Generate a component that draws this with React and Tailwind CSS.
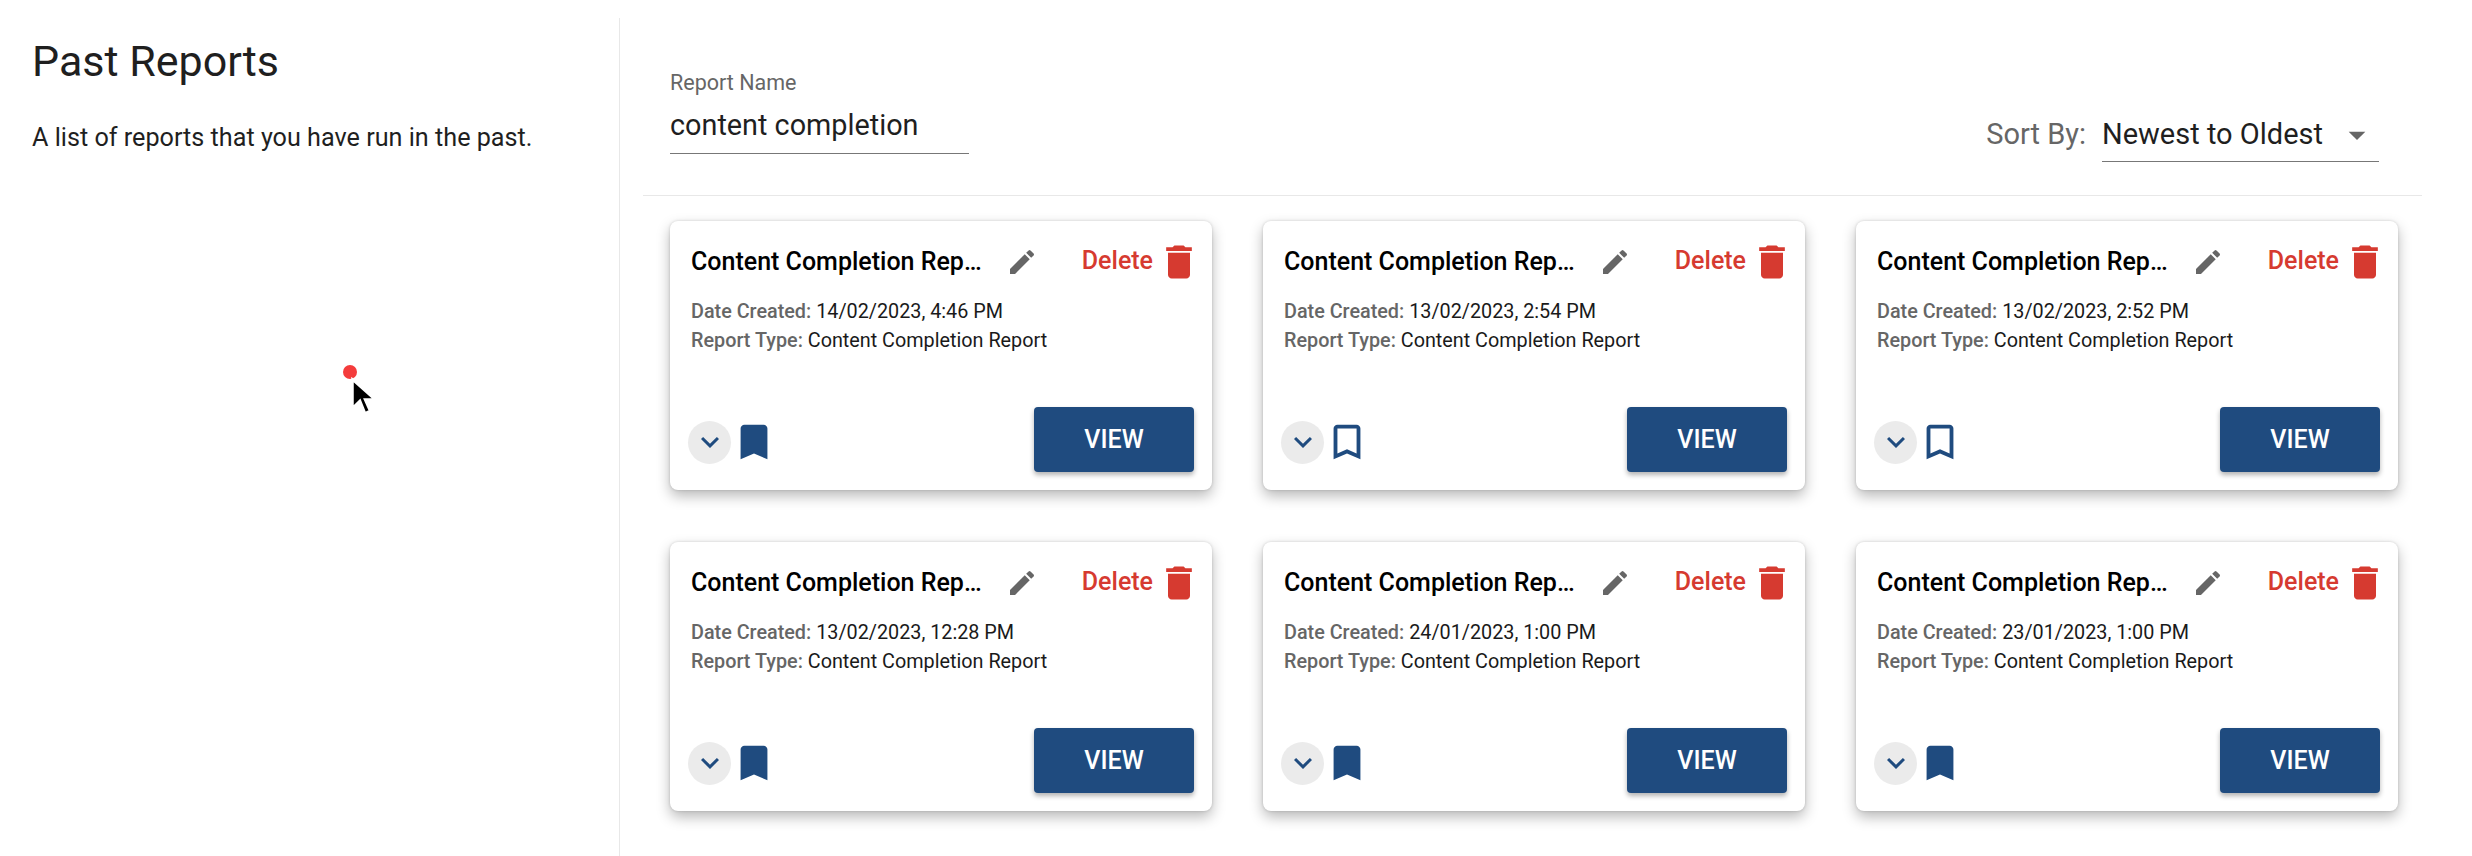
const P = {
  edit: "M3 17.25V21h3.75L17.81 9.94l-3.75-3.75L3 17.25zM20.71 7.04c.39-.39.39-1.02 0-1.41l-2.34-2.34a.9959.9959 0 0 0-1.41 0l-1.83 1.83 3.75 3.75 1.83-1.83z",
  trash: "M6 19c0 1.1.9 2 2 2h8c1.1 0 2-.9 2-2V7H6v12zM19 4h-3.5l-1-1h-5l-1 1H5v2h14V4z",
  chev: "M7.41 8.59 12 13.17l4.59-4.58L18 10l-6 6-6-6 1.41-1.41z",
  mark: "M17 3H7c-1.1 0-1.99.9-1.99 2L5 21l7-3 7 3V5c0-1.1-.9-2-2-2z",
  markO: "M17 3H7c-1.1 0-2 .9-2 2v16l7-3 7 3V5c0-1.1-.9-2-2-2zm0 15-5-2.18L7 18V5h10v13z",
  drop: "M7 10l5 5 5-5z",
};

function Icon({ d, className }) {
  return (
    <svg viewBox="0 0 24 24" fill="currentColor" className={className}>
      <path d={d} />
    </svg>
  );
}

const reports = [
  { date: "14/02/2023, 4:46 PM", saved: true },
  { date: "13/02/2023, 2:54 PM", saved: false },
  { date: "13/02/2023, 2:52 PM", saved: false },
  { date: "13/02/2023, 12:28 PM", saved: true },
  { date: "24/01/2023, 1:00 PM", saved: true },
  { date: "23/01/2023, 1:00 PM", saved: true },
];

function Card({ date, saved }) {
  return (
    <div className="h-[269px] rounded-[8px] bg-white pt-[25px] pb-[18px] pl-[21px] pr-[18px] flex flex-col shadow-[0_6px_14px_rgba(0,0,0,0.28),0_0_3px_rgba(0,0,0,0.16)]">
      <div className="flex items-center h-[32px]">
        <span className="w-[295px] truncate text-[25px] leading-[32px] font-medium text-black">
          Content Completion Report
        </span>
        <Icon d={P.edit} className="w-[32px] h-[32px] ml-[20px] text-[#666666]" />
        <span className="ml-auto text-[25px] leading-[32px] font-medium text-[#d63a30] -mt-[2px]">Delete</span>
        <Icon d={P.trash} className="w-[44px] h-[44px] -mr-[7px] ml-[4px] text-[#d63a30]" />
      </div>
      <div className="mt-[19px] text-[19.8px] leading-[29px] text-[#1a1a1a]">
        <div><span className="font-medium text-[#666666]">Date Created:</span> {date}</div>
        <div><span className="font-medium text-[#666666]">Report Type:</span> Content Completion Report</div>
      </div>
      <div className="mt-auto flex items-end justify-between">
        <div className="flex items-center -ml-[3px] mb-[7px]">
          <div className="w-[43px] h-[43px] rounded-full bg-[#ebebeb] flex items-center justify-center">
            <Icon d={P.chev} className="w-[36px] h-[36px] text-[#1f4b7f]" />
          </div>
          <Icon d={saved ? P.mark : P.markO} className="w-[46px] h-[46px] text-[#1f4b7f]" />
        </div>
        <button className="w-[160px] h-[65px] rounded-[4px] bg-[#1f4b7f] text-white text-[25px] font-medium shadow-[0_3px_5px_rgba(0,0,0,0.3)]">
          VIEW
        </button>
      </div>
    </div>
  );
}

export default function App() {
  return (
    <div className="relative h-[856px] w-[2472px] overflow-hidden bg-white flex font-['Roboto',sans-serif]">
      <aside className="w-[620px] mt-[18px] shrink-0 border-r border-[#e8e8e8] pl-[32px]">
        <h1 className="mt-[17px] text-[43px] leading-[52px] text-[#1f1f1f]">Past Reports</h1>
        <p className="mt-[35px] text-[25.2px] leading-[32px] text-[#1f1f1f]">A list of reports that you have run in the past.</p>
      </aside>
      <main className="flex-1 pl-[23px] pr-[50px]">
        <div className="h-[196px] border-b border-[#e8e8e8] pl-[27px] pr-[43px] flex items-start justify-between">
          <div className="mt-[70px] w-[299px]">
            <div className="text-[21.5px] leading-[26px] text-[#666666]">Report Name</div>
            <div className="mt-[1px] h-[57px] border-b border-[#777777] text-[28.8px] leading-[56px] text-[#1f1f1f]">content completion</div>
          </div>
          <div className="mt-[112px] flex items-start">
            <span className="text-[29px] leading-[45px] text-[#666666]">Sort By:</span>
            <div className="ml-[16px] w-[277px] h-[50px] border-b border-[#777777] flex items-start justify-between">
              <span className="text-[29px] leading-[45px] text-[#1f1f1f]">Newest to Oldest</span>
              <Icon d={P.drop} className="w-[40px] h-[40px] mt-[3px] mr-[2px] text-[#666666]" />
            </div>
          </div>
        </div>
        <div className="mt-[25px] pl-[27px] grid grid-cols-[repeat(3,542px)] gap-x-[51px] gap-y-[52px]">
          {reports.map((r) => <Card key={r.date} {...r} />)}
        </div>
      </main>
      <div className="absolute left-[343px] top-[365px] w-[14px] h-[14px] rounded-full bg-[#f43c3c]" />
      <svg viewBox="0 0 20 32" className="absolute left-[350px] top-[377px] w-[25px] h-[40px]">
        <path d="M2 2v23l6-6 4 10 4-2-4-9h8z" fill="#000" stroke="#fff" strokeWidth="2" />
      </svg>
    </div>
  );
}
